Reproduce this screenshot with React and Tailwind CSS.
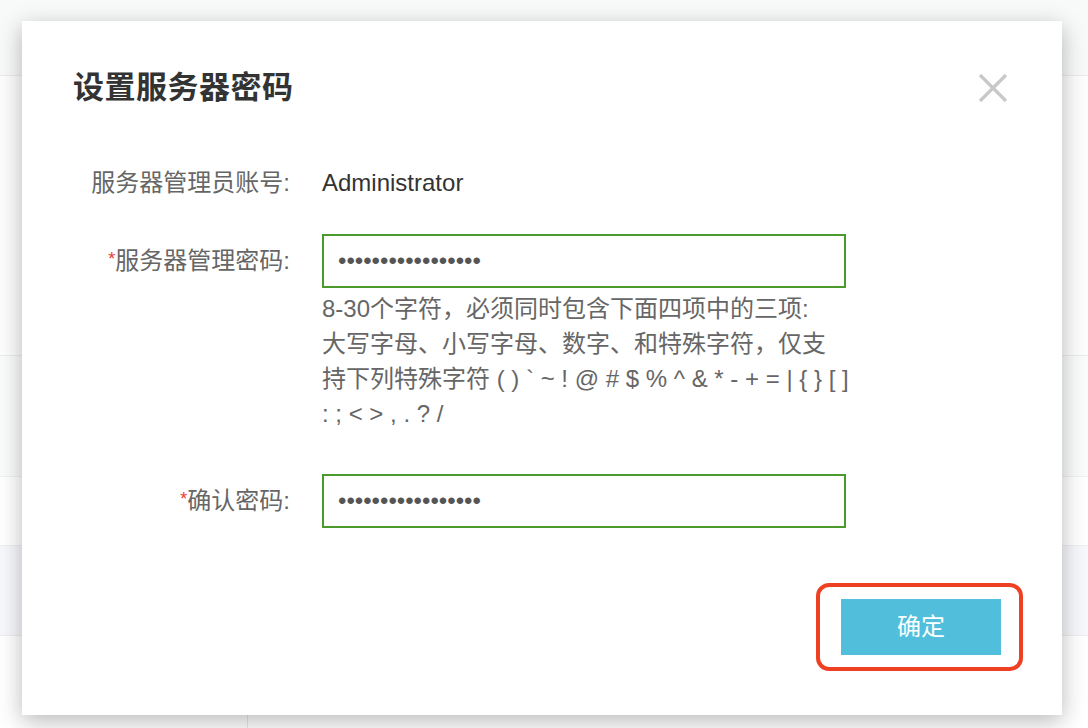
import React from 'react';

const FONT = "font-['Liberation_Sans','Noto_Sans_CJK_SC',sans-serif]";

const Dots = ({ count }) => (
  <span className="text-[24px] leading-none text-[#555555] font-['Liberation_Sans',sans-serif]">
    {'\u2022'.repeat(count)}
  </span>
);

const Required = () => (
  <span className="text-[18px] text-[#ee3a2c] align-top relative top-[-2px]">*</span>
);

const FieldLabel = ({ required, children }) => (
  <div className="w-[268px] shrink-0 text-right text-[24px] leading-[36px] text-[#666666]">
    {required && <Required />}
    {children}
  </div>
);

const PasswordBox = ({ count }) => (
  <div className="w-[524px] h-[54px] border-2 border-[#4a9a2e] flex items-center px-[14px] bg-white">
    <Dots count={count} />
  </div>
);

const CloseIcon = () => (
  <svg width="30" height="30" viewBox="0 0 30 30">
    <line x1="2" y1="2" x2="28" y2="28" stroke="#c8c8c8" strokeWidth="3.2" />
    <line x1="28" y1="2" x2="2" y2="28" stroke="#c8c8c8" strokeWidth="3.2" />
  </svg>
);

export default function App() {
  return (
    <div className={`relative w-[1088px] h-[728px] overflow-hidden bg-white ${FONT}`}>
      {/* page behind the dialog */}
      <div className="flex flex-col">
        <div className="h-[76px] bg-[#f8f9f9] border-b border-[#ececec]" />
        <div className="h-[280px] bg-[#fdfdfd] border-b border-[#ececec]" />
        <div className="h-[121px] bg-[#fafbfb] border-b border-[#f0f0f0]" />
        <div className="h-[69px] bg-white border-b border-[#efefef]" />
        <div className="h-[90px] bg-[#f7f8fb] border-b border-[#ededed]" />
        <div className="h-[92px] flex">
          <div className="w-[248px] border-r border-[#e8e8e8]" />
        </div>
      </div>

      {/* dialog */}
      <div className="absolute left-[22px] top-[21px] w-[1040px] h-[694px] bg-white shadow-[0_6px_22px_rgba(0,0,0,0.28)] flex flex-col">
        <div className="flex items-center justify-between pt-[47px] pl-[73px] pr-[54px] -ml-[22px]">
          <div className="text-[31px] leading-[40px] font-bold text-[#333333] tracking-[0.5px]">设置服务器密码</div>
          <CloseIcon />
        </div>

        <div className="mt-[57px] flex items-center">
          <FieldLabel>服务器管理员账号:</FieldLabel>
          <div className="ml-[32px] text-[24px] leading-[36px] text-[#333333]">Administrator</div>
        </div>

        <div className="mt-[33px] flex items-center">
          <FieldLabel required>服务器管理密码:</FieldLabel>
          <div className="ml-[32px]">
            <PasswordBox count={17} />
          </div>
        </div>

        <div className="flex">
          <div className="w-[268px] shrink-0" />
          <div className="ml-[32px] w-[530px] mt-[3px] text-[24px] leading-[35px] text-[#666666]">
            <div>8-30个字符，必须同时包含下面四项中的三项:</div>
            <div>大写字母、小写字母、数字、和特殊字符，仅支</div>
            <div>持下列特殊字符 ( ) ` ~ ! @ # $ % ^ &amp; * - + = | {'{ }'} [ ]</div>
            <div>: ; &lt; &gt; , . ? /</div>
          </div>
        </div>

        <div className="mt-[43px] flex items-center">
          <FieldLabel required>确认密码:</FieldLabel>
          <div className="ml-[32px]">
            <PasswordBox count={17} />
          </div>
        </div>

        <div className="mt-[55px] flex justify-end pr-[39px]">
          <div className="border-[4px] border-[#ee4124] rounded-[13px] pl-[21px] pr-[18px] pt-[12px] pb-[12px]">
            <button className="w-[160px] h-[56px] bg-[#51bfdb] text-white text-[24px] leading-none">
              确定
            </button>
          </div>
        </div>
      </div>
    </div>
  );
}
